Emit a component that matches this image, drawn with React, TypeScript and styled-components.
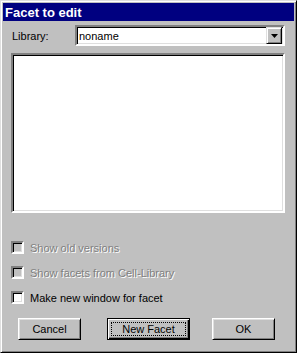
import * as React from 'react'
import styled, { createGlobalStyle } from 'styled-components'

const GlobalStyle = createGlobalStyle`
  html, body {
    margin: 0;
    padding: 0;
    background: #c0c0c0;
  }
  * {
    box-sizing: border-box;
  }
`

type CheckOption = {
  label: string
  disabled: boolean
}

const options: CheckOption[] = [
  { label: 'Show old versions', disabled: true },
  { label: 'Show facets from Cell-Library', disabled: true },
  { label: 'Make new window for facet', disabled: false },
]

const App = () => {
  return (
    <>
      <GlobalStyle />
      <Window>
        <TitleBar>Facet to edit</TitleBar>
        <Body>
          <LibraryRow>
            <FieldLabel>Library:</FieldLabel>
            <Combo>
              <ComboText>noname</ComboText>
              <DropButton>
                <svg width="7" height="4" viewBox="0 0 7 4">
                  <polygon points="0,0 7,0 3.5,4" fill="#000" />
                </svg>
              </DropButton>
            </Combo>
          </LibraryRow>
          <ListBox />
          <Checks>
            {options.map(option => (
              <CheckRow key={option.label}>
                <CheckBox $disabled={option.disabled} />
                <CheckLabel $disabled={option.disabled}>{option.label}</CheckLabel>
              </CheckRow>
            ))}
          </Checks>
          <ButtonRow>
            <Button $width={63}>
              <ButtonFace>Cancel</ButtonFace>
            </Button>
            <Button $width={83} $default>
              <ButtonFace $focused>New Facet</ButtonFace>
            </Button>
            <Button $width={63} $shift={-4}>
              <ButtonFace>OK</ButtonFace>
            </Button>
          </ButtonRow>
        </Body>
      </Window>
    </>
  )
}

export default App

const Window = styled.div`
  width: 297px;
  height: 353px;
  padding: 2px;
  background: #c0c0c0;
  border: 1px solid;
  border-color: #dfdfdf #000 #000 #dfdfdf;
  box-shadow: inset 1px 1px #fff, inset -1px -1px #808080;
  font-family: 'Liberation Sans', Arial, sans-serif;
  font-size: 11px;
  color: #000;
`

const TitleBar = styled.div`
  height: 18px;
  padding-left: 2px;
  display: flex;
  align-items: center;
  background: #000080;
  color: #fff;
  font-weight: bold;
  font-size: 13px;
`

const Body = styled.div`
  padding: 4px 9px 0 8px;
  display: flex;
  flex-direction: column;
`

const LibraryRow = styled.div`
  display: flex;
  align-items: center;
  height: 21px;
`

const FieldLabel = styled.div`
  width: 64px;
  padding-left: 1px;
`

const sunken = `
  border: 2px solid;
  border-color: #808080 #fff #fff #808080;
  box-shadow: inset 1px 1px #000, inset -1px -1px #dfdfdf;
`

const Combo = styled.div`
  flex: 1;
  height: 21px;
  display: flex;
  align-items: center;
  background: #fff;
  ${sunken}
  padding: 0 1px 0 2px;
`

const ComboText = styled.div`
  flex: 1;
`

const DropButton = styled.div`
  width: 16px;
  height: 17px;
  display: flex;
  align-items: center;
  justify-content: center;
  background: #c0c0c0;
  border: 1px solid;
  border-color: #dfdfdf #000 #000 #dfdfdf;
  box-shadow: inset 1px 1px #fff, inset -1px -1px #808080;
`

const ListBox = styled.div`
  margin-top: 7px;
  height: 160px;
  background: #fff;
  ${sunken}
`

const Checks = styled.div`
  margin-top: 28px;
  display: flex;
  flex-direction: column;
  gap: 12px;
`

const CheckRow = styled.div`
  display: flex;
  align-items: center;
  height: 13px;
`

const CheckBox = styled.div<{ $disabled: boolean }>`
  width: 13px;
  height: 13px;
  background: ${p => (p.$disabled ? '#c0c0c0' : '#fff')};
  ${sunken}
`

const CheckLabel = styled.span<{ $disabled: boolean }>`
  margin-left: 6px;
  color: ${p => (p.$disabled ? '#808080' : '#000')};
  text-shadow: ${p => (p.$disabled ? '1px 1px #fff' : 'none')};
`

const ButtonRow = styled.div`
  margin-top: 14px;
  padding-left: 7px;
  display: flex;
  gap: 26px;
`

const Button = styled.div<{ $width: number; $default?: boolean; $shift?: number }>`
  width: ${p => p.$width}px;
  height: 22px;
  margin-left: ${p => p.$shift ?? 0}px;
  display: flex;
  background: #c0c0c0;
  border: 1px solid;
  border-color: ${p => (p.$default ? '#000' : '#fff #000 #000 #fff')};
  box-shadow: ${p =>
    p.$default
      ? 'inset 1px 1px #fff, inset -1px -1px #000, inset -2px -2px #808080'
      : 'inset 1px 1px #dfdfdf, inset -1px -1px #808080'};
  padding: 3px;
`

const ButtonFace = styled.span<{ $focused?: boolean }>`
  flex: 1;
  display: flex;
  align-items: center;
  justify-content: center;
  border: 1px dotted ${p => (p.$focused ? '#000' : 'transparent')};
`
